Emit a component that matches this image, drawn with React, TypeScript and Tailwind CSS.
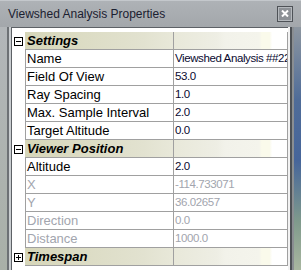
import React from "react";

type Row =
  | { kind: "header"; label: string; open: boolean }
  | { kind: "prop"; label: string; value: string; disabled?: boolean };

const rows: Row[] = [
  { kind: "header", label: "Settings", open: true },
  { kind: "prop", label: "Name", value: "Viewshed Analysis ##22" },
  { kind: "prop", label: "Field Of View", value: "53.0" },
  { kind: "prop", label: "Ray Spacing", value: "1.0" },
  { kind: "prop", label: "Max. Sample Interval", value: "2.0" },
  { kind: "prop", label: "Target Altitude", value: "0.0" },
  { kind: "header", label: "Viewer Position", open: true },
  { kind: "prop", label: "Altitude", value: "2.0" },
  { kind: "prop", label: "X", value: "-114.733071", disabled: true },
  { kind: "prop", label: "Y", value: "36.02657", disabled: true },
  { kind: "prop", label: "Direction", value: "0.0", disabled: true },
  { kind: "prop", label: "Distance", value: "1000.0", disabled: true },
  { kind: "header", label: "Timespan", open: false },
];

function ExpandBox({ open }: { open: boolean }) {
  return (
    <div className="ml-[2px] w-[9px] h-[9px] border border-black bg-white relative">
      <div className="absolute left-[1px] top-[3px] w-[5px] h-[1px] bg-black" />
      {!open && <div className="absolute left-[3px] top-[1px] w-[1px] h-[5px] bg-black" />}
    </div>
  );
}

export default function App() {
  return (
    <div
      className="w-[301px] h-[270px] overflow-hidden flex flex-col bg-[#a9adb1]"
      style={{ fontFamily: '"Liberation Sans", Arial, sans-serif' }}
    >
      {/* title bar */}
      <div className="h-[27px] shrink-0 flex items-center border-t border-[#c4c8cc] bg-[linear-gradient(to_bottom,#aeb2b6,#a3a7ab)]">
        <span className="ml-[8px] text-[12px] text-[#1b2030] leading-none">Viewshed Analysis Properties</span>
        <div className="ml-auto mr-[8px] mb-[1px] w-[16px] h-[16px] border border-[#4e5257] bg-[#8d9196] flex items-center justify-center shadow-[inset_0_0_0_1px_#b5b9bd]">
          <svg width="8" height="7" viewBox="0 0 8 7">
            <path d="M1 0.5 L7 6.5 M7 0.5 L1 6.5" stroke="#ffffff" strokeWidth="2" />
          </svg>
        </div>
      </div>
      {/* body */}
      <div className="flex flex-1 min-h-0">
        {/* left frame */}
        <div className="w-[11px] shrink-0 flex">
          <div className="w-[7px] bg-[linear-gradient(to_bottom,#b2b6b9,#a9b0a8)]" />
          <div className="w-[2px] bg-[#6d7175]" />
          <div className="w-[2px] bg-[#c9cdd0]" />
        </div>
        {/* grid */}
        <div className="w-[277px] shrink-0 border-l border-t border-[#5d6166] bg-white pt-[4px] flex flex-col">
          {rows.map((r, i) =>
            r.kind === "header" ? (
              <div key={i} className="flex h-[18px] shrink-0">
                <div className="w-[13px] shrink-0 flex items-center">
                  <ExpandBox open={r.open} />
                </div>
                <div className="flex w-[263px] border-b border-[#a0a0a0] bg-[linear-gradient(to_right,#d6d6b9,#e2e2d0_45%,#e8e8d9_56%,#eeeee4_73%,#f2f2ea_76%,#f4f4ec_89%,#fafaeb_90%,#fafaeb_93%,#ffffff_94%)]">
                  <div className="w-[148px] shrink-0 pl-[2px] flex items-center text-[13px] font-bold italic text-black leading-none">
                    {r.label}
                  </div>
                  <div className="flex-1 border-l border-[#a0a0a0] border-r" />
                </div>
              </div>
            ) : (
              <div key={i} className="flex h-[18px] shrink-0">
                <div className="w-[13px] shrink-0" />
                <div className="flex w-[263px] border-b border-[#a0a0a0]">
                  <div
                    className={
                      "w-[148px] shrink-0 border-l border-[#a0a0a0] pl-[1px] flex items-center text-[13px] leading-none whitespace-nowrap overflow-hidden " +
                      (r.disabled ? "text-[#a2a5ae]" : "text-black")
                    }
                  >
                    {r.label}
                  </div>
                  <div
                    className={
                      "w-[115px] shrink-0 border-l border-r border-[#a0a0a0] pl-[1px] flex items-center text-[11.5px] tracking-[-0.4px] leading-none whitespace-nowrap overflow-hidden " +
                      (r.disabled ? "text-[#a2a5ae]" : "text-[#0a0a30]")
                    }
                  >
                    {r.value}
                  </div>
                </div>
              </div>
            )
          )}
        </div>
        {/* right frame */}
        <div className="flex-1 flex">
          <div className="w-[2px] bg-[#f2f2f2]" />
          <div className="w-[2px] bg-[#4d5155]" />
          <div className="w-[2px] bg-[#8a8e92]" />
          <div className="flex-1 bg-[linear-gradient(to_bottom,#8d96a0,#4f6c98_30%,#46659a_55%,#7f9a8c_80%,#a9b7a0)]" />
        </div>
      </div>
    </div>
  );
}
